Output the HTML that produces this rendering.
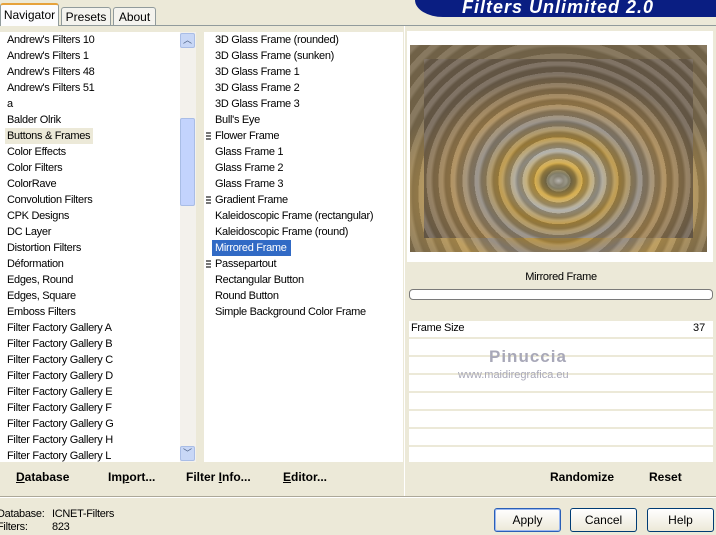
<!DOCTYPE html><html><head><style>
*{margin:0;padding:0;box-sizing:border-box}
body{width:716px;height:535px;background:#ece9d8;font-family:"Liberation Sans",sans-serif;font-size:11px;color:#000;position:relative;overflow:hidden}
.a{position:absolute}
.row{height:16px;line-height:16px;white-space:nowrap;letter-spacing:-0.3px}
.tab{position:absolute;top:7px;height:19px;border:1px solid #919b9c;border-bottom:none;background:#f4f3ee;border-radius:3px 3px 0 0;text-align:center;line-height:18px;font-size:12px}
.btn{position:absolute;top:508px;width:67px;height:24px;border:1px solid #003c74;border-radius:3px;background:linear-gradient(#fff,#ece9d8);text-align:center;line-height:22px;font-size:12px}
.b{font-weight:bold;font-size:12px}
.grip{position:absolute;left:-9px;top:4px;width:5px;height:9px;background:repeating-linear-gradient(#777 0 2px,transparent 2px 3px)}
</style></head><body>
<div class="tab" style="left:0;top:3px;width:59px;height:23px;background:#fcfcfe;border-top:2px solid #e6a23c;z-index:2;line-height:20px">Navigator</div>
<div class="tab" style="left:61px;width:50px">Presets</div>
<div class="tab" style="left:113px;width:43px">About</div>
<div class="a" style="left:0;top:25px;width:716px;height:1px;background:#919b9c"></div>
<div class="a" style="left:415px;top:0;width:301px;height:17px;background:#0a1e82;border-radius:0 0 0 28px/0 0 0 17px"></div>
<div class="a" style="left:462px;top:-3px;color:#fff;font-weight:bold;font-style:italic;font-size:18px;letter-spacing:1px">Filters Unlimited 2.0</div>

<div class="a" style="left:0;top:32px;width:180px;height:430px;background:#fff"></div>
<div class="a" style="left:180px;top:32px;width:16px;height:430px;background:#f3f1ec"></div>
<div class="a" style="left:180px;top:33px;width:15px;height:15px;border:1px solid #a9bde6;border-radius:2px;background:#c8d7f6;color:#4d6185;text-align:center;font-size:9px;line-height:13px">︿</div>
<div class="a" style="left:180px;top:118px;width:15px;height:88px;border:1px solid #a9bde6;border-radius:2px;background:#c3d3fd"></div>
<div class="a" style="left:180px;top:446px;width:15px;height:15px;border:1px solid #a9bde6;border-radius:2px;background:#c8d7f6;color:#4d6185;text-align:center;font-size:9px;line-height:13px">﹀</div>
<div class="a" style="left:196px;top:32px;width:8px;height:430px;background:#ece9d8"></div>
<div class="a" style="left:204px;top:32px;width:199px;height:430px;background:#fff"></div>

<div class="a" style="left:7px;top:32px">
<div class="row">Andrew's Filters 10</div><div class="row">Andrew's Filters 1</div><div class="row">Andrew's Filters 48</div><div class="row">Andrew's Filters 51</div><div class="row">a</div><div class="row">Balder Olrik</div><div class="row"><span style="background:#ece9d8;margin-left:-2px;padding:0 3px 0 2px;display:inline-block">Buttons &amp; Frames</span></div><div class="row">Color Effects</div><div class="row">Color Filters</div><div class="row">ColorRave</div><div class="row">Convolution Filters</div><div class="row">CPK Designs</div><div class="row">DC Layer</div><div class="row">Distortion Filters</div><div class="row">Déformation</div><div class="row">Edges, Round</div><div class="row">Edges, Square</div><div class="row">Emboss Filters</div><div class="row">Filter Factory Gallery A</div><div class="row">Filter Factory Gallery B</div><div class="row">Filter Factory Gallery C</div><div class="row">Filter Factory Gallery D</div><div class="row">Filter Factory Gallery E</div><div class="row">Filter Factory Gallery F</div><div class="row">Filter Factory Gallery G</div><div class="row">Filter Factory Gallery H</div><div class="row">Filter Factory Gallery L</div>
</div>
<div class="a" style="left:215px;top:32px">
<div class="row">3D Glass Frame (rounded)</div><div class="row">3D Glass Frame (sunken)</div><div class="row">3D Glass Frame 1</div><div class="row">3D Glass Frame 2</div><div class="row">3D Glass Frame 3</div><div class="row">Bull's Eye</div><div class="row" style="position:relative"><span class="grip"></span>Flower Frame</div><div class="row">Glass Frame 1</div><div class="row">Glass Frame 2</div><div class="row">Glass Frame 3</div><div class="row" style="position:relative"><span class="grip"></span>Gradient Frame</div><div class="row">Kaleidoscopic Frame (rectangular)</div><div class="row">Kaleidoscopic Frame (round)</div><div class="row"><span style="background:#316ac5;color:#fff;margin-left:-3px;padding:0 4px 0 3px;display:inline-block">Mirrored Frame</span></div><div class="row" style="position:relative"><span class="grip"></span>Passepartout</div><div class="row">Rectangular Button</div><div class="row">Round Button</div><div class="row">Simple Background Color Frame</div>
</div>

<div class="a" style="left:404px;top:26px;width:312px;height:470px;background:#ece9d8;border-left:1px solid #fff"></div>
<div class="a" style="left:407px;top:31px;width:306px;height:231px;background:#fff"></div>
<div class="a" style="left:410px;top:45px;width:297px;height:207px;background:repeating-radial-gradient(ellipse at 50% 72%,rgba(80,70,50,.25) 0 6px,rgba(255,255,255,.1) 9px 14px),radial-gradient(ellipse 60% 55% at 50% 72%,#ddd 0,#8a8070 8%,#c9a23e 18%,#9c9489 30%,#b08a3a 42%,#8d8378 55%,#b89550 70%,#7a6a4e 100%)"></div>
<div class="a" style="left:424px;top:59px;width:269px;height:179px;background:repeating-radial-gradient(ellipse at 50% 68%,rgba(70,60,40,.3) 0 5px,rgba(255,255,255,.12) 8px 12px),radial-gradient(ellipse 55% 60% at 50% 68%,#e8e8e8 0,#6f6a52 7%,#d2a53a 16%,#a8a7a2 28%,#b8913c 40%,#8f887f 55%,#a88650 72%,#6e6050 100%)"></div>
<div class="a" style="left:409px;top:266px;width:304px;height:22px;text-align:center;line-height:22px;letter-spacing:-0.3px">Mirrored Frame</div>
<div class="a" style="left:409px;top:289px;width:304px;height:11px;border:1px solid #7a7a7a;border-radius:4px;background:#fff"></div>
<div class="a" style="left:409px;top:321px;width:304px;height:141px;background:repeating-linear-gradient(#fff 0 16px,#ece9d8 16px 18px)"></div>
<div class="a" style="left:411px;top:322px;letter-spacing:-0.3px">Frame Size</div>
<div class="a" style="left:693px;top:322px">37</div>
<div class="a" style="left:489px;top:347px;color:#a8a8b8;font-size:17px;font-weight:bold;letter-spacing:1px">Pinuccia</div>
<div class="a" style="left:458px;top:369px;color:#a8a8b8;font-size:11px">www.maidiregrafica.eu</div>
<div class="a b" style="left:550px;top:470px">Randomize</div>
<div class="a b" style="left:649px;top:470px">Reset</div>

<div class="a b" style="left:16px;top:470px"><u>D</u>atabase</div>
<div class="a b" style="left:108px;top:470px">Im<u>p</u>ort...</div>
<div class="a b" style="left:186px;top:470px">Filter <u>I</u>nfo...</div>
<div class="a b" style="left:283px;top:470px"><u>E</u>ditor...</div>
<div class="a" style="left:0;top:496px;width:716px;height:1px;background:#aca899"></div>
<div class="a" style="left:0;top:497px;width:716px;height:1px;background:#fff"></div>
<div class="a" style="left:-3px;top:508px;line-height:13px;letter-spacing:-0.3px">Database:<br>Filters:</div>
<div class="a" style="left:52px;top:508px;line-height:13px;letter-spacing:-0.3px">ICNET-Filters<br>823</div>
<div class="btn" style="left:494px;border-color:#2a5fb7;box-shadow:inset 0 0 0 1px #9bb8ef">Apply</div>
<div class="btn" style="left:570px">Cancel</div>
<div class="btn" style="left:647px">Help</div>
</body></html>
